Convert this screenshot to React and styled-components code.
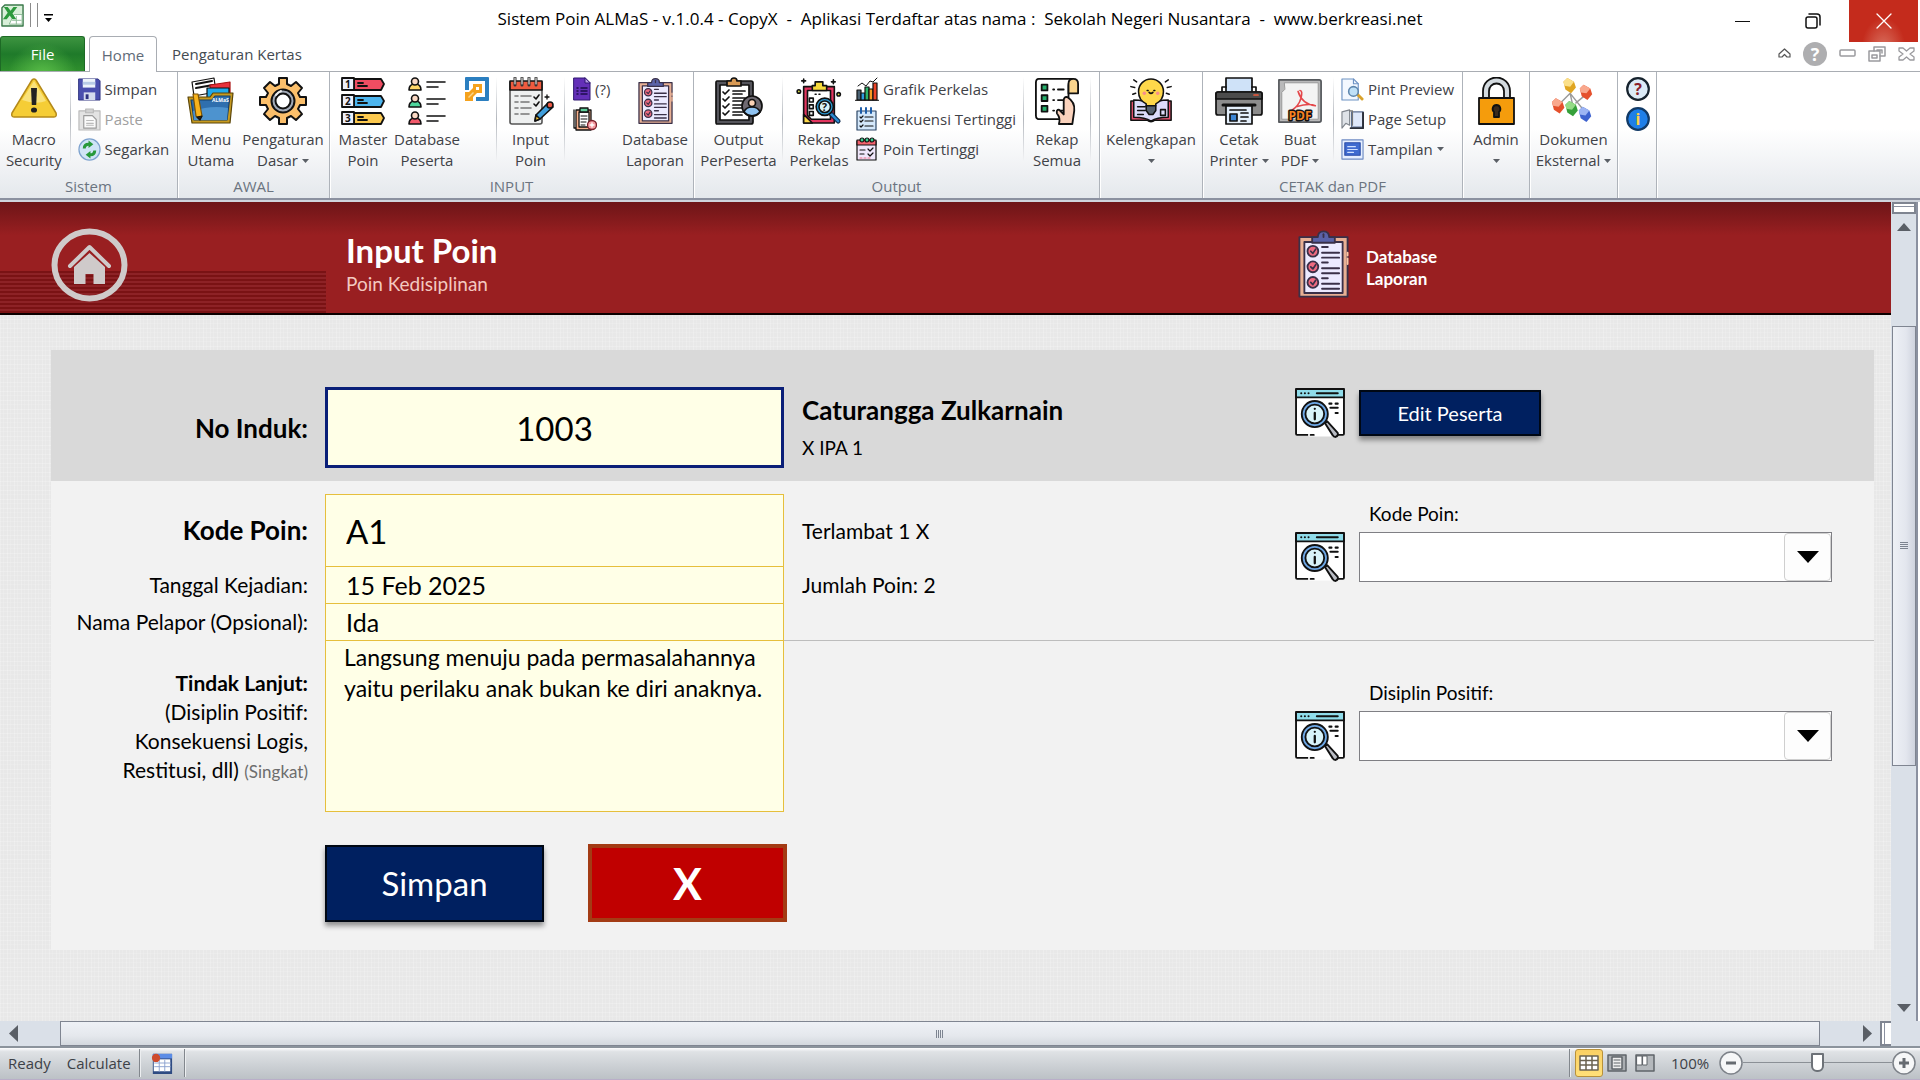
import React from "react";
import styled, { createGlobalStyle, css } from "styled-components";

const ui = '"Open Sans", "Noto Sans", sans-serif';
const sheetFont = 'Lato, "Open Sans", sans-serif';

const Global = createGlobalStyle`
  * { box-sizing: border-box; }
  html, body { margin: 0; padding: 0; }
  body { font-family: ${ui}; background: #fff; color: #000; }
  button, input, select, textarea { font: inherit; color: inherit; margin: 0; border-radius: 0; }
  button { border: 0; padding: 0; background: none; }
  svg { display: block; flex: none; }
`;

/* ---------- window frame ---------- */
const Window = styled.div`
  display: flex;
  flex-direction: column;
  min-height: 100vh;
`;
const TitleBar = styled.header`
  display: grid;
  grid-template-columns: 1fr auto 1fr;
  height: 36px;
`;
const QuickAccess = styled.div`
  display: flex;
  align-items: center;
  gap: 6px;
  padding-left: 1px;
  height: 30px;
`;
const QuickDivider = styled.span`
  width: 1px;
  height: 24px;
  background: #8b8b8b;
`;
const QuickMenu = styled.button`
  padding-top: 6px;
`;
const WindowTitle = styled.h1`
  margin: 0;
  font-size: 17px;
  line-height: 38px;
  font-weight: 400;
  white-space: pre;
`;
const WindowControls = styled.div`
  display: flex;
  justify-content: flex-end;
  gap: 3px;
  padding-right: 2px;
`;
const ControlButton = styled.button`
  display: flex;
  align-items: center;
  justify-content: center;
  width: 67px;
  height: 42px;
  ${(p) => p.$close && css`
    width: 69px;
    background: radial-gradient(ellipse at 50% 115%, #d9705f 0, #c42b1c 45%);
  `}
`;
const TabRow = styled.nav`
  display: flex;
  align-items: flex-end;
  height: 36px;
  border-bottom: 1px solid #a9adb3;
`;
const Tab = styled.button`
  height: 35px;
  padding: 0 15px;
  font-size: 15px;
  line-height: 37px;
  color: #444b52;
  ${(p) => p.$file && css`
    width: 85px;
    margin-right: 4px;
    padding: 0;
    color: #fff;
    border: 1px solid #1d6a25;
    border-bottom: 0;
    border-radius: 3px 3px 0 0;
    line-height: 35px;
    background: radial-gradient(ellipse at 50% 120%, #5cc04a 0, transparent 60%), linear-gradient(#3d9440, #1f7a2a 50%, #2f8f2d);
  `}
  ${(p) => p.$active && css`
    height: 36px;
    margin-bottom: -1px;
    width: 68px;
    padding: 0;
    color: #5f6b78;
    background: #fff;
    border: 1px solid #a9adb3;
    border-bottom: 0;
    border-radius: 4px 4px 0 0;
  `}
`;
const DocControls = styled.div`
  display: flex;
  align-items: center;
  gap: 12px;
  height: 35px;
  margin-left: auto;
  padding-right: 5px;
`;

/* ---------- ribbon ---------- */
const Ribbon = styled.div`
  display: flex;
  height: 128px;
  border-bottom: 2px solid #8b91a0;
  background: linear-gradient(#fff 0, #fff 45%, #eef0f3 80%, #e4e8ec);
`;
const Group = styled.section`
  display: flex;
  flex-direction: column;
  width: ${(p) => p.$w}px;
  border-right: 1px solid #aeb3ba;
  box-shadow: 1px 0 0 #fff;
`;
const GroupBody = styled.div`
  display: flex;
  justify-content: ${(p) => p.$justify || "flex-start"};
  height: 104px;
  padding: 5px 1px 0;
`;
const GroupName = styled.div`
  font-size: 15px;
  line-height: 20px;
  text-align: center;
  color: #6b7480;
`;
const BigButton = styled.button`
  display: flex;
  flex-direction: column;
  align-items: center;
  width: ${(p) => p.$w}px;
  font-size: 15px;
  line-height: 21px;
  color: #3f4247;
  white-space: nowrap;
`;
const BigIcon = styled.span`
  display: flex;
  align-items: center;
  height: 48px;
  margin-bottom: 4px;
`;
const LabelLine = styled.span`
  display: flex;
  align-items: center;
  height: 21px;
  gap: 4px;
`;
const Stack = styled.div`
  display: flex;
  flex-direction: column;
  padding-left: ${(p) => p.$pad ?? 6}px;
  width: ${(p) => p.$w}px;
`;
const SmallButton = styled.button`
  display: flex;
  align-items: center;
  gap: 4px;
  height: 30px;
  margin-top: -3px;
  margin-bottom: 3px;
  font-size: 15px;
  white-space: nowrap;
  color: ${(p) => (p.disabled ? "#a0a0a0" : "#3f4247")};
`;
const Separator = styled.span`
  width: 1px;
  height: 84px;
  margin-left: ${(p) => p.$gap || 0}px;
  background: linear-gradient(#fff, #b4b8be 50%, #f2f3f5);
`;

/* ---------- worksheet ---------- */
const SheetArea = styled.main`
  display: flex;
  flex: 1;
  border-top: 2px solid #cfd4dc;
`;
const Sheet = styled.div`
  flex: 1;
  min-width: 0;
  font-family: ${sheetFont};
  background-color: #e8e8e8;
  background-image:
    repeating-linear-gradient(90deg, rgba(255,255,255,.2) 0 1px, transparent 1px 3px, rgba(255,255,255,.12) 3px 4px, transparent 4px 7px),
    repeating-linear-gradient(rgba(255,255,255,.2) 0 1px, transparent 1px 4px, rgba(255,255,255,.12) 4px 5px, transparent 5px 9px);
`;
const columns = css`
  display: grid;
  grid-template-columns: 274px 459px 511px minmax(0, 1fr);
`;
const Banner = styled.div`
  ${columns}
  height: 113px;
  padding-left: 51px;
  border-bottom: 2px solid #0c0000;
  background:
    repeating-linear-gradient(#7a1214 0 2px, #8d2226 2px 4px) 0 100% / 326px 42px no-repeat,
    linear-gradient(#6d1517, #991f21 30%, #991f21);
`;
const HomeLink = styled.a`
  justify-self: start;
  padding-top: 26px;
`;
const BannerText = styled.div`
  padding: 28px 0 0 21px;
`;
const BannerTitle = styled.h2`
  margin: 0;
  font-size: 33px;
  line-height: 40px;
  color: #fff;
`;
const BannerSub = styled.div`
  font-size: 19px;
  line-height: 28px;
  color: #f3c9c0;
`;
const ReportLink = styled.a`
  display: flex;
  grid-column: 4;
  align-items: flex-start;
  gap: 17px;
  padding: 28px 0 0 3px;
  font-size: 17px;
  line-height: 22px;
  font-weight: 700;
  color: #fff;
  text-decoration: none;
`;
const ReportText = styled.span`
  padding-top: 16px;
`;
const Form = styled.form`
  margin: 35px 17px 70px 51px;
  background: #f2f2f2;
`;
const StudentRow = styled.div`
  ${columns}
  height: 131px;
  padding-top: 24px;
  align-items: center;
  background: #d9d9d9;
`;
const Details = styled.div`
  ${columns}
  grid-template-rows: 72px 37px 37px 172px;
  padding-top: 13px;
`;
const Label = styled.label`
  grid-column: 1;
  grid-row: ${(p) => p.$row};
  padding-right: 17px;
  text-align: right;
  white-space: nowrap;
  align-self: center;
  font-size: ${(p) => (p.$big ? 26 : 21)}px;
  font-weight: ${(p) => (p.$big ? 700 : 400)};
`;
const ActionLabel = styled(Label)`
  align-self: start;
  padding-top: 28px;
  line-height: 29px;
`;
const Note = styled.small`
  font-size: 17px;
  color: #6d6d6d;
`;
const field = css`
  grid-column: 2;
  grid-row: ${(p) => p.$row};
  display: block;
  width: 100%;
  min-width: 0;
  padding: 0 20px;
  background: #ffffe7;
  border: 1px solid #e6bf3c;
  outline: 0;
`;
const StudentInput = styled.input`
  ${field}
  height: 81px;
  border: 3px solid #0a1f78;
  font-size: 33px;
  text-align: center;
`;
const FieldInput = styled.input`
  ${field}
  height: calc(100% + 1px);
  font-size: ${(p) => (p.$big ? 33 : 25)}px;
`;
const FieldText = styled.textarea`
  ${field}
  height: 172px;
  padding: 1px 18px;
  font-size: 23px;
  line-height: 31px;
  resize: none;
  overflow: hidden;
`;
const Info = styled.div`
  grid-column: 3;
  grid-row: ${(p) => p.$row};
  padding-left: 18px;
  align-self: center;
  font-size: 21px;
  white-space: nowrap;
`;
const StudentName = styled.div`
  font-size: 26px;
  line-height: 40px;
  font-weight: 700;
`;
const StudentClass = styled.div`
  font-size: 19px;
  line-height: 36px;
`;
const Tool = styled.div`
  display: flex;
  align-self: start;
  align-items: center;
  gap: 14px;
  padding-top: 14px;
`;
const EditButton = styled.button`
  width: 182px;
  height: 46px;
  border: 2px solid #000814;
  background: #002060;
  color: #fff;
  font-size: 20px;
  box-shadow: 0 4px 5px rgba(0, 0, 0, .4);
`;
const Picker = styled.div`
  grid-column: 4;
  grid-row: ${(p) => p.$row};
  display: grid;
  grid-template-columns: 52px minmax(0, 1fr);
  column-gap: 12px;
  align-content: start;
  align-items: center;
  padding: ${(p) => p.$top}px 42px 0 0;
`;
const PickerLabel = styled.label`
  grid-column: 2;
  padding-left: 10px;
  font-size: 19px;
  line-height: 30px;
  margin-bottom: 3px;
`;
const SelectBox = styled.div`
  position: relative;
`;
const Select = styled.select`
  display: block;
  appearance: none;
  width: 100%;
  height: 50px;
  padding: 0 56px 0 10px;
  border: 1px solid #7f7f84;
  background: #fff;
`;
const SelectArrow = styled.span`
  position: absolute;
  top: 1px;
  right: 1px;
  bottom: 1px;
  display: flex;
  align-items: center;
  justify-content: center;
  width: 47px;
  border: 1px solid #cfcfcf;
  border-radius: 4px;
  background: #fdfdfd;
  pointer-events: none;
`;
const Rule = styled.div`
  grid-column: 3 / 5;
  grid-row: 4;
  height: 1px;
  background: #bdbdbd;
`;
const Actions = styled.div`
  display: flex;
  align-items: center;
  gap: 44px;
  padding: 32px 0 28px 274px;
`;
const SaveButton = styled(EditButton)`
  width: 219px;
  height: 77px;
  font-size: 33px;
`;
const CancelButton = styled.button`
  width: 199px;
  height: 78px;
  border: 4px solid #a33b14;
  background: #c00000;
  color: #fff;
  font-size: 43px;
  font-weight: 700;
`;

/* ---------- scroll bars ---------- */
const VBar = styled.div`
  display: flex;
  flex-direction: column;
  align-items: center;
  width: 27px;
  margin-right: 2px;
  border-right: 2px solid #8b91a0;
  background: #dae0e8;
`;
const VSplit = styled.span`
  width: 24px;
  height: 12px;
  border: 2px solid #7f8591;
  background: linear-gradient(#fff 2px, #8b91a0 2px 3px, #fff 3px);
`;
const ArrowButton = styled.button`
  display: flex;
  align-items: center;
  justify-content: center;
  width: 26px;
  height: 26px;
`;
const VThumb = styled.div`
  display: flex;
  align-items: center;
  justify-content: center;
  flex: 439;
  width: 24px;
  border: 1px solid #7f8591;
  background: linear-gradient(90deg, #eef1f6, #e3e6ee 60%, #cfd3de);
`;
const Space = styled.div`
  flex: ${(p) => p.$n};
`;
const HBar = styled.div`
  display: flex;
  align-items: center;
  height: 27px;
  padding-right: 29px;
  border-bottom: 2px solid #8b939c;
  background: #dae0e8;
`;
const HThumb = styled.div`
  display: flex;
  align-items: center;
  justify-content: center;
  flex: 1759;
  height: 25px;
  border: 1px solid #7f8591;
  background: linear-gradient(#eef1f6, #e5e8ed 60%, #d3d8de);
`;
const HSplit = styled.span`
  width: 11px;
  height: 25px;
  border: 2px solid #7f8591;
  border-right: 0;
  background: linear-gradient(90deg, #fff 2px, #8b91a0 2px 3px, #fff 3px);
`;

/* ---------- status bar ---------- */
const StatusBar = styled.footer`
  display: flex;
  align-items: center;
  height: 32px;
  padding: 0 4px 2px 0;
  font-size: 15px;
  color: #3d4147;
  border-bottom: 1px solid #b9aec8;
  background: linear-gradient(#fdfdfe, #dfe2e5 12%, #cfd3d7 50%, #bcc1c6);
`;
const StatusText = styled.span`
  padding: 0 8px;
`;
const StatusDivider = styled.span`
  width: 2px;
  height: 28px;
  border-left: 1px solid #82878d;
  background: #eceef0;
`;
const MacroButton = styled.button`
  padding: 0 11px 0 10px;
`;
const StatusRight = styled.div`
  display: flex;
  align-items: center;
  margin-left: auto;
`;
const ViewButton = styled.button`
  display: flex;
  align-items: center;
  justify-content: center;
  width: 28px;
  height: 28px;
  ${(p) => p.$on && css`
    margin-left: 4px;
    border: 1px solid #b8913a;
    border-radius: 3px;
    background: linear-gradient(#fbd063, #ffe078);
  `}
`;
const Zoom = styled.span`
  width: 60px;
  padding-left: 12px;
`;
const Slider = styled.input`
  appearance: none;
  width: 149px;
  height: 26px;
  background: linear-gradient(#8b9096, #8b9096) 0 50% / 100% 1px no-repeat;
  &::-webkit-slider-thumb {
    appearance: none;
    width: 13px;
    height: 19px;
    border: 2px solid #6d7278;
    border-radius: 1px 1px 6px 6px;
    background: #fff;
  }
`;

/* ---------- icons ---------- */
const Svg = ({ w = 48, h = w, vb = "0 0 48 48", children, ...rest }) => (
  <svg width={w} height={h} viewBox={vb} fill="none" stroke="#111" strokeWidth="1.5" strokeLinecap="round" strokeLinejoin="round" aria-hidden="true" {...rest}>
    {children}
  </svg>
);
const Caret = ({ w = 7, h = 4, d = "M0 0h14l-7 8z", vb = "0 0 14 8", fill = "#5a5f66" }) => (
  <Svg w={w} h={h} vb={vb} stroke="none" preserveAspectRatio="none"><path d={d} fill={fill} /></Svg>
);

const WarningIcon = () => (
  <Svg>
    <path d="M22 3q2-2 4 0l20 33q1 4-2 4H4q-3 0-2-4z" fill="#f5cd36" stroke="#b58a1a" />
    <path d="M24 4 12 23q14 5 24 1z" fill="#f9e27c" stroke="none" />
    <path d="M21 11h6l-.8 17h-4.400z" fill="#222" stroke="none" />
    <ellipse cx="24" cy="33" rx="3" ry="2.600" fill="#222" stroke="none" />
  </Svg>
);
const SaveIcon = () => (
  <Svg w={23} vb="0 0 24 24">
    <path d="M1 1h20l2 2v20H1z" fill="#4a4fae" stroke="#2d3180" strokeWidth="1" />
    <path d="M5 1h13v9H5z" fill="#eef4fb" stroke="none" /><path d="M6 15h12v8H6z" fill="#d5dbee" stroke="none" /><path d="M8 17h3v5H8z" fill="#2d3180" stroke="none" />
    <path d="M5 4h13v3H5z" fill="#b8cbe6" stroke="none" />
  </Svg>
);
const PasteIcon = () => (
  <Svg w={23} vb="0 0 24 24" stroke="#b9b9b9" strokeWidth="1.200">
    <path d="M1 3h22v20H1z" fill="#e3e3e3" /><path d="M8 1h8v4H8z" fill="#d2d2d2" /><path d="M6 8h9l4 4v9H6z" fill="#fafafa" stroke="#9a9a9a" /><path d="M9 13h7M9 16h7M9 18h7" stroke="#bbb" />
  </Svg>
);
const RefreshIcon = () => (
  <Svg w={23} vb="0 0 24 24">
    <circle cx="12" cy="12" r="11" fill="#cfe4f6" stroke="#7fa3cf" strokeWidth="1.300" />
    <path d="M5 11q0-6 6-6V2.500l5 4-5 4V8q-2.500 0-3 3z" fill="#27993a" stroke="none" />
    <path d="M19 13q0 6-6 6v2.500l-5-4 5-4V16q2.500 0 3-3z" fill="#27993a" stroke="none" />
  </Svg>
);
const FolderIcon = () => (
  <Svg strokeWidth="1.200">
    <path d="M5 5 27 1l2 14-22 4z" fill="#fff" /><path d="M9 7l16-3M9 11l17-3" strokeWidth="2" />
    <path d="M23 8 43 5v15H24z" fill="#e8323c" stroke="#a11" /><path d="M20 11h22v12H20z" fill="#1fa9ec" />
    <path d="M1 20h22l3-4h20l-3 30H5z" fill="#c79a1f" stroke="#5a4508" /><path d="M4 23h21l3-4h15l-3 24H7z" fill="#2f6fae" stroke="#17406b" />
    <path d="M6 34q18-6 35-3l-1 12H7z" fill="#4d93cf" stroke="none" />
    <path d="M6 17h5l4 22-3 3-3-3z" fill="#f7b21c" stroke="#7a5206" /><path d="M10 40l5-1-2 4z" fill="#222" />
    <text x="25" y="25" fontSize="5" fontWeight="700" fill="#fff" stroke="none">ALMaS</text>
  </Svg>
);
const GearIcon = () => (
  <Svg strokeWidth="2">
    <path d="M20 1h8v6l4 2 5-4 6 6-4 5 2 4h6v8h-6l-2 4 4 5-6 6-5-4-4 2v6h-8v-6l-4-2-5 4-6-6 4-5-2-4H1v-8h6l2-4-4-5 6-6 5 4 4-2z" fill="#fbbf6b" />
    <circle cx="24" cy="24" r="11.500" fill="#a3abb8" /><circle cx="24" cy="24" r="7.500" fill="#fff" />
    <path d="M17 18q2-3 5-4" stroke="#eee" />
  </Svg>
);
const MasterIcon = () => (
  <Svg w={44} h={48} vb="0 0 44 48" strokeWidth="1.800">
    {[["#ef4d62", 2, "1"], ["#4db5ee", 19, "2"], ["#fcc94f", 36, "3"]].map(([c, y, n]) => (
      <g key={n}>
        <path d={`M13 ${y}h27l3 5-3 6H13z`} fill={c} /><path d={`M1 ${y - 1}h12v12H1z`} fill="#eceffa" />
        <path d={`M17 ${y + 4}h5M17 ${y + 7}h9`} /><text x="4" y={y + 9} fontSize="10" fontWeight="700" fill="#111" stroke="none">{n}</text>
      </g>
    ))}
  </Svg>
);
const PeopleIcon = () => (
  <Svg w={40} h={48} vb="0 0 40 48" strokeWidth="1.600">
    {[["#ffd667", 1], ["#4fd69d", 18], ["#f2596b", 35]].map(([c, y]) => (
      <g key={y}>
        <path d={`M2 ${y + 12}q0-6 6-6t6 6z`} fill={c} /><circle cx="8" cy={y + 3.500} r="3.500" fill="#fbd9c4" />
        <path d={`M20 ${y + 4}h18M20 ${y + 9}h11`} />
      </g>
    ))}
  </Svg>
);
const LinkIcon = () => (
  <Svg w={24} vb="0 0 24 24" stroke="none">
    <path d="M0 1q0-1 1-1h22q1 0 1 1v22q0 1-1 1H11v-4h9V4H4v9H0z" fill="#2b7fc0" /><path d="M0 15h4l4-4V7h9v9h-5l-4 4v4H0z" fill="#f5a21d" /><path d="M11 10h3v3h-3z" fill="#fff" /><path d="m3 20 5-5 1 1-5 5z" fill="#fbd48c" />
  </Svg>
);
const NotepadIcon = () => (
  <Svg strokeWidth="1.600">
    <path d="M3 5h32v40q0 2-2 2H5q-2 0-2-2z" fill="#eef0f0" stroke="#555" /><path d="M3 4h32v9H3z" fill="#ef5b3f" />
    <path d="M8 1v7M15 1v7M22 1v7M29 1v7" stroke="#333" strokeWidth="3" /><path d="M8 1v6M15 1v6M22 1v6M29 1v6" stroke="#fff" strokeWidth="1" />
    <path d="M8 19h3M14 19h10M8 25h3M14 25h8M8 31h3M14 31h10M8 37h3M14 37h8" stroke="#777" /><path d="m27 20 2 2 3-4M27 27l2 2 3-4" />
    <path d="m28 44 1-6 12-12 5 4-13 12z" fill="#3f9edb" /><path d="m28 44 1-6 4 4z" fill="#f2c230" /><circle cx="43" cy="28" r="3" fill="#ee5a45" />
    <path d="M40 18v4M38 20h4" strokeWidth="1.300" />
  </Svg>
);
const FormDocIcon = () => (
  <Svg w={18} h={24} vb="0 0 18 24" strokeWidth="1" stroke="#2e1670">
    <path d="M1 1h11l5 5v17H1z" fill="#6430b8" /><path d="M12 1v5h5z" fill="#b79be8" /><path d="M4 11h1M4 14h1M4 17h1M8 11h6M8 14h6M8 17h6" stroke="#1d0d4c" strokeWidth="1.500" />
  </Svg>
);
const ClipAddIcon = () => (
  <Svg w={24} vb="0 0 24 24" strokeWidth="1.300">
    <path d="M1 3v18h3" /><path d="M3 3h15v20H3z" fill="#f7b08c" /><path d="M6 5h10v15H6z" fill="#fff" /><path d="M7 1h8v4H7z" fill="#5fcf9b" />
    <path d="M8 9h6M8 12h6M8 15h5M8 18h4" strokeWidth="1" /><circle cx="19" cy="18" r="4.500" fill="#f79aa0" stroke="#7a1f2b" /><path d="M17 18h4M19 16v4" stroke="#fff" />
  </Svg>
);
const ReportIcon = ({ w = 35, h = 48 }) => (
  <Svg w={w} h={h} vb="0 0 36 48" strokeWidth="1.300" stroke="#3a3048">
    <path d="M1 5h34v42H1z" fill="#e8b094" /><path d="M4.500 8.500h27v36h-27z" fill="#eceaff" />
    <path d="M10 5h4q0-4 4-4t4 4h4v4H10z" fill="#5a62a8" /><path d="M18 3v2" />
    {[15, 26, 37].map((y) => (
      <g key={y}>
        <circle cx="10.500" cy={y} r="3.800" fill="#ef6a80" /><path d={`m9 ${y} 1.500 1.500 2-3`} strokeWidth="1.200" />
        <path d={`M17 ${y - 3}h4M17 ${y + 1}h12M17 ${y + 4.500}h12`} strokeWidth="1.400" />
      </g>
    ))}
    <path d="M35 16v2M35 20v4" stroke="#ffc5a5" />
  </Svg>
);
const OutputIcon = () => (
  <Svg strokeWidth="1.700">
    <path d="M2 4h34q2 0 2 2v39q0 2-2 2H2q-1 0-1-2V6q0-2 1-2z" fill="#55555c" /><path d="M5 8h29v35H5z" fill="#fff" />
    <path d="M12 4h4q0-3 3-3t3 3h4v5H12z" fill="#d99a55" />
    {[16, 23, 30, 37].map((y) => <path key={y} d={`m8 ${y - 1} 2 2 4-4M18 ${y - 2}h12M18 ${y + 1}h9`} />)}
    <circle cx="37" cy="29" r="10" fill="#6f6a72" /><path d="M29 35q2-5 8-5t8 5q-8 8-16 0z" fill="#8fc3f2" /><circle cx="37" cy="26" r="3.500" fill="#fbd3b6" />
  </Svg>
);
const RecapClassIcon = () => (
  <Svg w={46} h={48} strokeWidth="1.700">
    <path d="M8 9h32v38H8z" fill="#e2355f" /><path d="M12 13h24v30H16l-4-4z" fill="#fff" /><path d="M8 38l9 9H8z" fill="#ffd94a" />
    <path d="M17 8h3V4h8v4h4v5H17z" fill="#f6d93b" /><path d="M20 17h8" strokeDasharray="1 3" /><path d="M14 21h4v4h-4zM14 28h4v4h-4zM14 35h4v4h-4z" />
    <path d="m35 36 9 9" stroke="#0e2b4d" strokeWidth="5" /><path d="m36 37 8 8" stroke="#2d8bd2" strokeWidth="2.500" />
    <circle cx="30" cy="30" r="9" fill="#2a9bd6" /><circle cx="30" cy="30" r="6" fill="#d9f3f8" />
    <text x="27" y="34" fontSize="11" fontWeight="700" fill="#111" stroke="none">?</text>
    <path d="M8 1v4M6 3h4M39 2v4M37 4h4" /><circle cx="3" cy="14" r="1.800" fill="#dbe04c" /><circle cx="44.500" cy="17" r="1.800" fill="#dbe04c" />
  </Svg>
);
const ChartIcon = () => (
  <Svg w={24} vb="0 0 24 24" strokeWidth="1.200">
    <path d="M2 13h4v10H2z" fill="#4a6274" /><path d="M6 16h4v7H6z" fill="#2f9be0" /><path d="M10 10h4v13h-4z" fill="#2db46a" /><path d="M14 12h4v11h-4z" fill="#f59a23" /><path d="M18 6h4v17h-4z" fill="#ee4427" />
    <path d="m3 9 4-3 4 3 4-5 3 1 4-4M0 23.300h24" strokeWidth="1" />
  </Svg>
);
const FreqIcon = () => (
  <Svg w={24} vb="0 0 24 24" strokeWidth="1.200">
    <path d="M2 4h19v19H2z" fill="#d4e8fb" stroke="#2c4666" /><path d="M6 1v5M11 1v5M16 1v5" stroke="#1e5da8" strokeWidth="2" /><path d="m5 10 1 1 2-2M5 14l1 1 2-2M5 19l1 1 2-2M10 10h8M10 14h8M10 19h8" />
  </Svg>
);
const PointIcon = () => (
  <Svg w={24} vb="0 0 24 24" strokeWidth="1.200">
    <path d="M2 4h19v19H2z" fill="#efe7fb" /><path d="M2 3h19v5H2z" fill="#f4626e" /><circle cx="7" cy="3" r="2" fill="#3fcf92" /><circle cx="12" cy="3" r="2" fill="#3fcf92" /><circle cx="17" cy="3" r="2" fill="#3fcf92" />
    <path d="M5 13h5M5 17h4M13 12l2 2 3-3M13 17l2 2 3-3" /><path d="M5 21h12" stroke="#ee6b86" strokeDasharray="2 2" />
  </Svg>
);
const RecapAllIcon = () => (
  <Svg w={46} h={48} strokeWidth="1.900">
    <path d="M5 1h36q-5 0-5 7v32q0 3-4 3H6q-4 0-4-4V5q0-4 3-4z" fill="#fff" /><path d="M36 16V6q0-5 5-5t5 5v10z" fill="#fbd58d" />
    {[7, 18, 29].map((y) => <g key={y}><path d={`M8 ${y}h6v6H8z`} fill="#27b06c" /><path d={`M20 ${y + 5}h1M25 ${y + 5}h6`} /></g>)}
    <path d="M26 48q2-6-2-11-1-4 2-4l5 5V24q0-5 4-4 8 5 7 14-1 7-2 14z" fill="#fbd3bd" />
  </Svg>
);
const BulbIcon = () => (
  <Svg w={46} h={48} strokeWidth="1.600">
    <path d="M3 24h18l4 3 3-3h17v20H28q-4 3-8 0H3z" fill="#e2536e" /><path d="M6 23q12 0 18 5 6-5 18-5v18q-12 0-18 4-6-4-18-4z" fill="#dcdcfa" />
    <path d="M10 30h8M10 34h8M10 38h6M34 33h5v6h-5z" /><path d="M19 27q-8-4-8-13a13 13 0 0 1 26 0q0 9-8 13v2H19z" fill="#ffd84a" />
    <path d="M19 29h10v5l-3 4h-4l-3-4z" fill="#56616e" /><path d="M20 13h1M27 13h1M22 15q2 2 4 0" /><circle cx="17" cy="16" r="1.800" fill="#f78d8d" stroke="none" /><circle cx="31" cy="16" r="1.800" fill="#f78d8d" stroke="none" />
    <path d="m6 2 3 2M3 9l4 1M5 17l3-1M42 2l-3 2M45 9l-4 1M43 17l-3-1" />
  </Svg>
);
const PrinterIcon = () => (
  <Svg strokeWidth="1.700">
    <path d="M11 1h26v16H11z" fill="#cfe2f8" /><path d="M11 10H7v6M37 10h4v6" /><path d="M3 15h42q2 0 2 2v19q0 2-2 2H3q-2 0-2-2V17q0-2 2-2z" fill="#8c8c8c" /><path d="M1 22h46v-5q0-2-2-2H3q-2 0-2 2z" fill="#4c4c4c" />
    <path d="M39 18h4" stroke="#ee5a3a" /><path d="M8 28h32" strokeWidth="3" /><path d="M11 29h26v18H11z" fill="#e4effb" /><path d="M15 37h7v7h-7z" fill="#3c86d6" /><path d="M26 36h7M26 40h7M26 44h5M15 33h16" />
  </Svg>
);
const PdfIcon = () => (
  <Svg w={46} h={48} strokeWidth="1.800" stroke="#55585c">
    <path d="M2 2h42q2 0 2 2v40q0 2-2 2H2z" fill="#b9b9ba" /><path d="M8 5h35v38H5V15l3-3z" fill="#f3f3f3" stroke="#999" strokeWidth="1" />
    <path d="M24 13q3 0 1 8t-10 13M22 14q4 13 18 15-6-3-20 1" stroke="#e4474b" strokeWidth="1.700" />
    <text x="12" y="44" fontSize="12.500" fontWeight="700" fill="#f58220" stroke="#111" strokeWidth="3" paintOrder="stroke">PDF</text>
  </Svg>
);
const PreviewIcon = () => (
  <Svg w={23} vb="0 0 24 24" strokeWidth="1.200">
    <path d="M1 1h12l5 5v17H1z" fill="#f3f8ff" stroke="#6f93c4" /><path d="M13 1v5h5" stroke="#6f93c4" /><path d="m17 17 5 5" stroke="#d9a22b" strokeWidth="3" /><circle cx="13" cy="14" r="5" fill="#bfe0f7" stroke="#5e86ad" strokeWidth="1.600" />
  </Svg>
);
const SetupIcon = () => (
  <Svg w={23} vb="0 0 24 24" strokeWidth="1.200">
    <path d="M1 4 9 2v16l-4-2-4 5z" fill="#dfe3e8" stroke="#80868e" /><path d="M11 4h12v16H11z" fill="#dfe8fa" stroke="#5d6f92" /><path d="M10 21h13V5" stroke="#2b2f3a" strokeWidth="2" /><path d="M9 3h3v15" stroke="#777" />
  </Svg>
);
const ViewIcon = () => (
  <Svg w={23} vb="0 0 24 24" strokeWidth="1.200">
    <path d="M1 2h22v20H1z" fill="#e6efff" stroke="#6f8cc4" /><path d="M4 5h16v13H4z" fill="#3f6bd0" stroke="#2b4ea8" /><path d="M7 9h8M7 12h10M7 15h6" stroke="#cfe0ff" />
  </Svg>
);
const LockIcon = () => (
  <Svg w={37} h={48} vb="0 0 37 48" strokeWidth="1.800">
    <path d="M5 22V14a13.500 13.500 0 0 1 27 0v8h-6v-8a7.500 7.500 0 0 0-15 0v8z" fill="#d3dadf" /><path d="M1 21h35v26H1z" fill="#f59c0c" />
    <path d="M18.500 28a4 4 0 0 1 2.500 7v5h-5v-5a4 4 0 0 1 2.500-7z" fill="#3a2a1c" />
  </Svg>
);
const GemsIcon = () => (
  <Svg w={46} h={48} stroke="none">
    <path d="M20 16 8 28M20 16l3 14M20 16l16 20M38 16 26 26" stroke="#9a9a9a" strokeWidth="1.500" />
    {[["#e0a520", "#fbe08a", 19, 8], ["#e5502c", "#f9a88d", 36, 15], ["#e5502c", "#f9a88d", 7, 29], ["#35a03a", "#94db86", 21, 32], ["#3e62cf", "#9db4f3", 35, 38]].map(([c, l, x, y]) => (
      <g key={x}><path d={`M${x - 6} ${y - 4}l4-4 7 4 2 6-5 6-6-4z`} fill={c} /><path d={`M${x - 6} ${y - 4}l4-4 7 4-4 5-6-1z`} fill={l} /></g>
    ))}
  </Svg>
);
const RoundIcon = ({ fill, stroke, color, t }) => (
  <Svg w={24} vb="0 0 24 24">
    <circle cx="12" cy="12" r="10.800" fill={fill} stroke={stroke} strokeWidth="2.200" />
    <text x="12" y="17.500" textAnchor="middle" fontSize="16" fontWeight="700" fill={color} stroke="none">{t}</text>
  </Svg>
);
const HomeIcon = () => (
  <Svg w={77} h={74} vb="0 0 77 74" stroke="#cfcaca" preserveAspectRatio="none">
    <ellipse cx="38.500" cy="37" rx="35" ry="33.500" strokeWidth="6" /><path d="m19 38 19.500-19L58 38" strokeWidth="4" />
    <path d="M23 39 38.500 25 54 39v17H42.500V46h-8v10H23z" fill="#cfcaca" stroke="none" />
  </Svg>
);
const SearchIcon = () => (
  <Svg w={50} strokeWidth="1.800">
    <path d="M2 1h44q1 0 1 1v42q0 1-1 1H2q-1 0-1-1V2q0-1 1-1z" fill="#fff" /><path d="M1 1h46v8H1z" fill="#8fdcea" /><path d="M6 5h0M9.500 5h0M13 5h0M21 5h20" strokeWidth="2" />
    <path d="M14 45h20" stroke="#fff" strokeWidth="3" /><path d="M15 45h3" /><path d="M33 15h2M39 15h2M34 19h7M39 24h2" strokeWidth="2" />
    <path d="m29 34 2-2 10 11q1 3-2 4-2 0-3-2z" fill="#b9bcc4" /><circle cx="19" cy="25" r="12.500" fill="#6ea8e6" /><circle cx="19" cy="25" r="9" fill="#d8f3fa" /><path d="M19 20v0M19 24v6" strokeWidth="2.200" />
  </Svg>
);
const ExcelIcon = () => (
  <Svg w={23} vb="0 0 24 24" strokeWidth="1">
    <path d="M4 1h19v22H1V4z" fill="#d9efd9" stroke="#3b7a4b" strokeWidth="1.500" /><path d="M14 11h8v10H9z" fill="#fff" stroke="#8dbb97" /><path d="M12 17h9M16 13v8" stroke="#8dbb97" />
    <path d="M3 3h4l3 4 3-4h4l-5 7 4 6h-4l-3-4-3 4H2l5-7z" fill="#2d9a3d" stroke="none" />
  </Svg>
);
const MacroIcon = () => (
  <Svg w={22} vb="0 0 22 24" stroke="none">
    <path d="M1 2h21v22H1z" fill="#2e4b82" /><path d="M2 8h18v13H2z" fill="#fff" /><path d="M1 2h21v5H1z" fill="#5b8ce6" /><path d="M3 12h17M3 16h17M8 9v12M14 9v12" stroke="#8aa0cf" strokeWidth="1" /><circle cx="4.500" cy="6.500" r="4.500" fill="#cf4a2c" />
  </Svg>
);
const Grip = ({ vertical }) => (
  <Svg w={8} vb="0 0 8 8" stroke="#7d8490" strokeWidth="1" strokeLinecap="butt">
    <path d={vertical ? "M0 .5h8M0 2.500h8M0 4.500h8M0 6.500h8" : "M.5 0v8M2.500 0v8M4.500 0v8M6.500 0v8"} />
  </Svg>
);
const ZoomIcon = ({ plus }) => (
  <Svg w={24} vb="0 0 24 24" stroke="#7d8289">
    <circle cx="12" cy="12" r="11" fill="#f6f7f8" /><path d={plus ? "M7 12h10M12 7v10" : "M7 12h10"} strokeWidth="3" stroke="#666b71" strokeLinecap="butt" />
  </Svg>
);

/* ---------- pieces ---------- */
const Big = ({ w, icon, l1, l2, arrow }) => (
  <BigButton type="button" $w={w}>
    <BigIcon>{icon}</BigIcon>
    <LabelLine>{l1}</LabelLine>
    <LabelLine>{l2}{arrow && <Caret />}</LabelLine>
  </BigButton>
);
const Small = ({ icon, text, arrow, disabled, label }) => (
  <SmallButton type="button" disabled={disabled} aria-label={label}>{icon}{text}{arrow && <Caret />}</SmallButton>
);
const PickerField = ({ id, label, row, top }) => (
  <Picker $row={row} $top={top}>
    <PickerLabel htmlFor={id}>{label}</PickerLabel>
    <SearchIcon />
    <SelectBox>
      <Select id={id} defaultValue=""><option value="" /></Select>
      <SelectArrow><Caret w={22} h={12} fill="#000" /></SelectArrow>
    </SelectBox>
  </Picker>
);

export default function App() {
  return (
    <Window>
      <Global />
      <TitleBar>
        <QuickAccess>
          <ExcelIcon /><QuickDivider /><QuickDivider />
          <QuickMenu type="button" aria-label="Quick access menu"><Svg w={9} h={8} vb="0 0 9 8" stroke="none"><path d="M0 0h9v1.500H0zM1 4h7L4.500 8z" fill="#000" /></Svg></QuickMenu>
        </QuickAccess>
        <WindowTitle>{"Sistem Poin ALMaS - v.1.0.4 - CopyX  -  Aplikasi Terdaftar atas nama :  Sekolah Negeri Nusantara  -  www.berkreasi.net"}</WindowTitle>
        <WindowControls>
          <ControlButton type="button" aria-label="Minimize"><Svg w={15} vb="0 0 15 15" strokeLinecap="butt"><path d="M0 7.500h15" strokeWidth="1" /></Svg></ControlButton>
          <ControlButton type="button" aria-label="Restore"><Svg w={16} vb="0 0 16 16"><rect x="1" y="4" width="11" height="11" rx="2" /><path d="M4 1h8q3 0 3 3v8" /></Svg></ControlButton>
          <ControlButton type="button" aria-label="Close" $close><Svg w={16} vb="0 0 16 16"><path d="m1 1 14 14M15 1 1 15" stroke="#fff" strokeWidth="1.300" /></Svg></ControlButton>
        </WindowControls>
      </TitleBar>
      <TabRow>
        <Tab type="button" $file>File</Tab>
        <Tab type="button" $active>Home</Tab>
        <Tab type="button">Pengaturan Kertas</Tab>
        <DocControls>
          <Svg w={13} h={12} vb="0 0 13 12" stroke="#555"><path d="m1 6 5.500-5L12 6v3H9L6.500 6.500 4 9H1z" strokeWidth="1.200" /></Svg>
          <Svg w={24} vb="0 0 24 24" stroke="none"><circle cx="12" cy="12" r="12" fill="#aeaeb0" /><text x="12" y="18.500" textAnchor="middle" fontSize="18" fontWeight="700" fill="#fff">?</text></Svg>
          <Svg w={17} h={9} vb="0 0 17 9" stroke="#9a9a9e"><rect x="1" y="1" width="15" height="6" rx="1" strokeWidth="1.500" /></Svg>
          <Svg w={18} h={16} vb="0 0 18 16" stroke="#9a9a9e"><path d="M6 5V1h11v9h-5" /><path d="M1 5h11v10H1zM4 9h5v3H4zM9 4h5v3" /></Svg>
          <Svg w={17} h={14} vb="0 0 17 14" stroke="#9a9a9e"><path d="M1 1h4l3.500 3L12 1h4v3l-4 3 4 3v3h-4l-3.500-3L5 13H1v-3l4-3-4-3z" strokeWidth="1.300" /></Svg>
        </DocControls>
      </TabRow>

      <Ribbon>
        <Group $w={178}>
          <GroupBody>
            <Big w={66} icon={<WarningIcon />} l1="Macro" l2="Security" />
            <Separator $gap={3} />
            <Stack $w={106} $pad={7}>
              <Small icon={<SaveIcon />} text="Simpan" />
              <Small icon={<PasteIcon />} text="Paste" disabled />
              <Small icon={<RefreshIcon />} text="Segarkan" />
            </Stack>
          </GroupBody>
          <GroupName>Sistem</GroupName>
        </Group>
        <Group $w={152}>
          <GroupBody>
            <Big w={64} icon={<FolderIcon />} l1="Menu" l2="Utama" />
            <Big w={80} icon={<GearIcon />} l1="Pengaturan" l2="Dasar" arrow />
          </GroupBody>
          <GroupName>AWAL</GroupName>
        </Group>
        <Group $w={364}>
          <GroupBody>
            <Big w={64} icon={<MasterIcon />} l1="Master" l2="Poin" />
            <Big w={64} icon={<PeopleIcon />} l1="Database" l2="Peserta" />
            <Stack $w={37}><Small icon={<LinkIcon />} label="Relasi" /></Stack>
            <Separator />
            <Big w={67} icon={<NotepadIcon />} l1="Input" l2="Poin" />
            <Separator />
            <Stack $w={55} $pad={8}>
              <Small icon={<FormDocIcon />} text="(?)" />
              <Small icon={<ClipAddIcon />} label="Tambah" />
            </Stack>
            <Big w={70} icon={<ReportIcon />} l1="Database" l2="Laporan" />
          </GroupBody>
          <GroupName>INPUT</GroupName>
        </Group>
        <Group $w={406}>
          <GroupBody>
            <Big w={87} icon={<OutputIcon />} l1="Output" l2="PerPeserta" />
            <Separator />
            <Big w={72} icon={<RecapClassIcon />} l1="Rekap" l2="Perkelas" />
            <Stack $w={168} $pad={0}>
              <Small icon={<ChartIcon />} text="Grafik Perkelas" />
              <Small icon={<FreqIcon />} text="Frekuensi Tertinggi" />
              <Small icon={<PointIcon />} text="Poin Tertinggi" />
            </Stack>
            <Separator />
            <Big w={66} icon={<RecapAllIcon />} l1="Rekap" l2="Semua" />
            <Separator />
          </GroupBody>
          <GroupName>Output</GroupName>
        </Group>
        <Group $w={103}>
          <GroupBody $justify="center"><Big w={98} icon={<BulbIcon />} l1="Kelengkapan" arrow /></GroupBody>
        </Group>
        <Group $w={260}>
          <GroupBody>
            <Big w={70} icon={<PrinterIcon />} l1="Cetak" l2="Printer" arrow />
            <Big w={52} icon={<PdfIcon />} l1="Buat" l2="PDF" arrow />
            <Separator $gap={7} />
            <Stack $w={122} $pad={7}>
              <Small icon={<PreviewIcon />} text="Pint Preview" />
              <Small icon={<SetupIcon />} text="Page Setup" />
              <Small icon={<ViewIcon />} text="Tampilan" arrow />
            </Stack>
          </GroupBody>
          <GroupName>CETAK dan PDF</GroupName>
        </Group>
        <Group $w={67}>
          <GroupBody $justify="center"><Big w={62} icon={<LockIcon />} l1="Admin" arrow /></GroupBody>
        </Group>
        <Group $w={88}>
          <GroupBody $justify="center"><Big w={84} icon={<GemsIcon />} l1="Dokumen" l2="Eksternal" arrow /></GroupBody>
        </Group>
        <Group $w={39}>
          <GroupBody>
            <Stack $w={36} $pad={7}>
              <Small icon={<RoundIcon fill="#dcebf7" stroke="#17232e" color="#8a1f2b" t="?" />} />
              <Small icon={<RoundIcon fill="#1f7fe8" stroke="#123a66" color="#ffd23f" t="i" />} />
            </Stack>
          </GroupBody>
        </Group>
      </Ribbon>

      <SheetArea>
        <Sheet>
          <Banner>
            <HomeLink href="#home" aria-label="Home"><HomeIcon /></HomeLink>
            <BannerText>
              <BannerTitle>Input Poin</BannerTitle>
              <BannerSub>Poin Kedisiplinan</BannerSub>
            </BannerText>
            <ReportLink href="#laporan"><ReportIcon w={51} h={68} /><ReportText>Database<br />Laporan</ReportText></ReportLink>
          </Banner>
          <Form onSubmit={(e) => e.preventDefault()}>
            <StudentRow>
              <Label htmlFor="induk" $big>No Induk:</Label>
              <StudentInput id="induk" defaultValue="1003" />
              <Info>
                <StudentName>Caturangga Zulkarnain</StudentName>
                <StudentClass>X IPA 1</StudentClass>
              </Info>
              <Tool><SearchIcon /><EditButton type="button">Edit Peserta</EditButton></Tool>
            </StudentRow>
            <Details>
              <Label htmlFor="kode" $row={1} $big>Kode Poin:</Label>
              <FieldInput id="kode" $row={1} defaultValue="A1" $big />
              <Info $row={1}>Terlambat 1 X</Info>
              <Label htmlFor="tanggal" $row={2}>Tanggal Kejadian:</Label>
              <FieldInput id="tanggal" $row={2} defaultValue="15 Feb 2025" />
              <Info $row={2}>Jumlah Poin: 2</Info>
              <Label htmlFor="pelapor" $row={3}>Nama Pelapor (Opsional):</Label>
              <FieldInput id="pelapor" $row={3} defaultValue="Ida" />
              <ActionLabel htmlFor="tindak" $row={4}><b>Tindak Lanjut:</b><br />(Disiplin Positif:<br />Konsekuensi Logis,<br />Restitusi, dll) <Note>(Singkat)</Note></ActionLabel>
              <FieldText id="tindak" $row={4} defaultValue={"Langsung menuju pada permasalahannya yaitu perilaku anak bukan ke diri anaknya."} />
              <Rule />
              <PickerField id="pilih-kode" label="Kode Poin:" row="1 / 4" top={5} />
              <PickerField id="pilih-disiplin" label="Disiplin Positif:" row="4" top={38} />
            </Details>
            <Actions>
              <SaveButton type="submit">Simpan</SaveButton>
              <CancelButton type="button">X</CancelButton>
            </Actions>
          </Form>
        </Sheet>
        <VBar>
          <VSplit />
          <ArrowButton type="button" aria-label="Scroll up"><Caret w={14} h={8} d="M0 8h14L7 0z" /></ArrowButton>
          <Space $n={86} />
          <VThumb><Grip vertical /></VThumb>
          <Space $n={230} />
          <ArrowButton type="button" aria-label="Scroll down"><Caret w={14} h={8} /></ArrowButton>
        </VBar>
      </SheetArea>
      <HBar>
        <ArrowButton type="button" aria-label="Scroll left"><Caret w={9} h={17} vb="0 0 8 14" d="M8 0v14L0 7z" /></ArrowButton>
        <Space $n={34} />
        <HThumb><Grip /></HThumb>
        <Space $n={34} />
        <ArrowButton type="button" aria-label="Scroll right"><Caret w={9} h={17} vb="0 0 8 14" d="M0 0v14l8-7z" /></ArrowButton>
        <HSplit />
      </HBar>
      <StatusBar>
        <StatusText>Ready</StatusText>
        <StatusText>Calculate</StatusText>
        <StatusDivider />
        <MacroButton type="button" aria-label="Record macro"><MacroIcon /></MacroButton>
        <StatusDivider />
        <StatusRight>
          <StatusDivider />
          <ViewButton type="button" aria-label="Normal view" $on><Svg w={20} h={16} vb="0 0 20 16" stroke="#6b6350" strokeWidth="1.500"><path d="M1 1h18v14H1zM1 5.500h18M1 10h18M7 1v14M13 1v14" fill="#fff" /></Svg></ViewButton>
          <ViewButton type="button" aria-label="Page layout"><Svg w={20} h={18} vb="0 0 20 18" stroke="#5f6469"><path d="M1 1h18v16H1z" fill="#a9adb1" /><path d="M5 3h10v12H5z" fill="#eee" /><path d="M7 6h6M7 9h6M7 12h6" strokeWidth="1" /></Svg></ViewButton>
          <ViewButton type="button" aria-label="Page break preview"><Svg w={20} h={18} vb="0 0 20 18" stroke="#5f6469"><path d="M1 1h18v16H1z" fill="#b4b8bc" /><path d="M2 2h5v9H2zM8 2h4v9H8z" fill="#fff" strokeWidth="1" /></Svg></ViewButton>
          <Zoom>100%</Zoom>
          <button type="button" aria-label="Zoom out"><ZoomIcon /></button>
          <Slider type="range" min="0" max="100" defaultValue="50" aria-label="Zoom" />
          <button type="button" aria-label="Zoom in"><ZoomIcon plus /></button>
        </StatusRight>
      </StatusBar>
    </Window>
  );
}
